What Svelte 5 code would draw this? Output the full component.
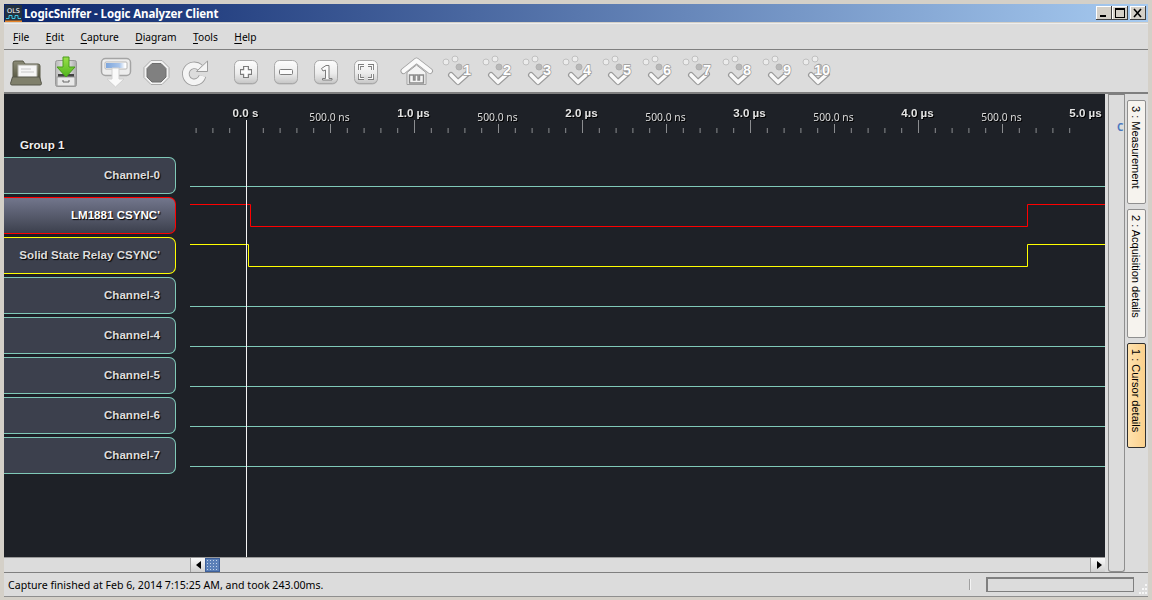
<script lang="ts">
	const menus = [
		{ key: 'F', rest: 'ile' },
		{ key: 'E', rest: 'dit' },
		{ key: 'C', rest: 'apture' },
		{ key: 'D', rest: 'iagram' },
		{ key: 'T', rest: 'ools' },
		{ key: 'H', rest: 'elp' }
	];

	const channels = [
		{ name: 'Channel-0', tone: 'teal' },
		{ name: "LM1881 CSYNC'", tone: 'red' },
		{ name: "Solid State Relay CSYNC'", tone: 'yellow' },
		{ name: 'Channel-3', tone: 'teal' },
		{ name: 'Channel-4', tone: 'teal' },
		{ name: 'Channel-5', tone: 'teal' },
		{ name: 'Channel-6', tone: 'teal' },
		{ name: 'Channel-7', tone: 'teal' }
	];

	const tabs = [
		{ label: '3 : Measurement', height: 104, active: false },
		{ label: '2 : Acquisition details', height: 129, active: false },
		{ label: '1 : Cursor details', height: 105, active: true }
	];

	const markers = [1, 2, 3, 4, 5, 6, 7, 8, 9, 10];

	// ruler: 500 ns is 84 px, minor ticks every 100 ns
	const origin = 246.5;
	const ticks = Array.from({ length: 53 }, (_, i) => i - 3).map((i) => ({
		x: origin + i * 16.8,
		top: i % 10 === 0 ? 120 : i % 5 === 0 ? 124 : 128
	}));
	const major = ['0.0 s', '1.0 µs', '2.0 µs', '3.0 µs', '4.0 µs', '5.0 µs'];
	const minor = [0, 1, 2, 3, 4];

	const flatLines = [186.5, 306.5, 346.5, 386.5, 426.5, 466.5];
</script>

{#snippet key(shape)}
	<svg class="icon" width="32" height="32" viewBox="0 0 32 32">
		<rect x="4.5" y="5.5" width="23" height="23" rx="5" fill="#8f8f8f" opacity="0.5" />
		<rect x="4.5" y="4.5" width="23" height="23" rx="5" fill="url(#keyFill)" stroke="#a8a8a8" />
		{@render shape()}
	</svg>
{/snippet}

{#snippet plus()}
	<path d="M16 10v12M10 16h12" stroke="#7c7c7c" stroke-width="6" stroke-linejoin="round" />
	<path d="M16 11v10M11 16h10" stroke="#fbfbfb" stroke-width="3.6" />
{/snippet}

{#snippet minus()}
	<rect x="9.5" y="13.5" width="13" height="5" rx="1" fill="#fbfbfb" stroke="#7c7c7c" />
{/snippet}

{#snippet one()}
	<path d="M11.5 12.5 16 9.5h3v13h3v1.5h-9.5v-1.5h3v-8.5l-2.5 1z" fill="#fbfbfb" stroke="#7c7c7c" />
{/snippet}

{#snippet fit()}
	<path
		d="M9.5 14v-4.5H14M18 9.5h4.5V14M22.5 18v4.5H18M14 22.5H9.5V18"
		fill="none"
		stroke="#7c7c7c"
		stroke-width="3"
	/>
	<path
		d="M9.5 14v-4.5H14M18 9.5h4.5V14M22.5 18v4.5H18M14 22.5H9.5V18"
		fill="none"
		stroke="#fbfbfb"
		stroke-width="1.2"
	/>
{/snippet}

<div class="window">
	<header class="titlebar">
		<svg class="logo" width="17" height="17" viewBox="0 0 17 17">
			<rect width="17" height="17" fill="#24313f" />
			<text class="logo-text" x="8.5" y="7.5">OLS</text>
			<path d="M1 13.5h3v-3h3v3h3v-3h3v3h3" fill="none" stroke="#39c6e8" />
			<rect y="15.5" width="17" height="1.5" fill="#e8862c" />
		</svg>
		<span class="title">LogicSniffer - Logic Analyzer Client</span>
		<div class="winbtns">
			<button class="winbtn" aria-label="Minimize">
				<svg width="16" height="14"><rect x="4" y="9" width="6" height="2" fill="#000" /></svg>
			</button>
			<button class="winbtn" aria-label="Maximize">
				<svg width="16" height="14"
					><rect x="3.5" y="2.5" width="9" height="9" fill="none" stroke="#000" /><rect
						x="3"
						y="2"
						width="10"
						height="2"
						fill="#000"
					/></svg
				>
			</button>
			<button class="winbtn close" aria-label="Close">
				<svg width="16" height="14"
					><path d="M4 3l7 8M11 3l-7 8" stroke="#000" stroke-width="1.6" /></svg
				>
			</button>
		</div>
	</header>

	<nav class="menubar">
		{#each menus as m}
			<span class="menu"><u>{m.key}</u>{m.rest}</span>
		{/each}
	</nav>

	<div class="toolbar">
		<div class="group">
			<svg class="icon" width="32" height="32" viewBox="0 0 32 32">
				<defs>
					<linearGradient id="keyFill" x1="0" y1="0" x2="0" y2="1">
						<stop offset="0" stop-color="#fdfdfd" />
						<stop offset="0.55" stop-color="#ececec" />
						<stop offset="1" stop-color="#c6c6c6" />
					</linearGradient>
					<linearGradient id="folderFill" x1="0" y1="0" x2="0" y2="1">
						<stop offset="0" stop-color="#8a8a76" />
						<stop offset="1" stop-color="#55553f" />
					</linearGradient>
					<linearGradient id="cabFill" x1="0" y1="0" x2="1" y2="0">
						<stop offset="0" stop-color="#b8b8b8" />
						<stop offset="0.5" stop-color="#f2f2f2" />
						<stop offset="1" stop-color="#aaaaaa" />
					</linearGradient>
					<linearGradient id="greenFill" x1="0" y1="0" x2="0" y2="1">
						<stop offset="0" stop-color="#9ae04a" />
						<stop offset="1" stop-color="#4fb51c" />
					</linearGradient>
					<linearGradient id="blueBar" x1="0" y1="0" x2="1" y2="0">
						<stop offset="0" stop-color="#7ea6dc" />
						<stop offset="0.7" stop-color="#a8c4ea" />
						<stop offset="1" stop-color="#ffffff" />
					</linearGradient>
				</defs>
				<path d="M3 24V7q0-2 2-2h8l2 3h13q2 0 2 2v14z" fill="url(#folderFill)" stroke="#5a5a48" />
				<rect x="8" y="9" width="19" height="13" fill="#f6f6f6" stroke="#b0b0a8" />
				<path d="M11 13h10M11 16h13" stroke="#c8c8c8" />
				<path d="M2.500 21h27l2 6.500q0 1.500-1.500 1.500H2q-1.500 0-1.500-1.500z" fill="#80806c" stroke="#56564a" />
			</svg>
			<svg class="icon" width="32" height="32" viewBox="0 0 32 32">
				<rect x="5.500" y="4.500" width="21" height="26" rx="2" fill="url(#cabFill)" stroke="#999" />
				<rect x="8" y="18" width="16" height="3" fill="#444" />
				<rect x="7" y="21" width="18" height="9" fill="#e8e8e8" stroke="#9a9a9a" />
				<path d="M13 24v2h6v-2" fill="none" stroke="#666" />
				<path d="M13 1h6v10h6l-9 10-9-10h6z" fill="url(#greenFill)" stroke="#4a9c1c" />
			</svg>
		</div>
		<div class="group">
			<svg class="icon" width="32" height="32" viewBox="0 0 32 32">
				<rect x="1.500" y="2.500" width="29" height="17" rx="4" fill="#ededed" stroke="#a4a4a4" stroke-width="1.500" />
				<rect x="5" y="6" width="22" height="7" rx="1" fill="#fff" stroke="#b4b4b4" />
				<rect x="6" y="7" width="19" height="5" fill="url(#blueBar)" />
				<path d="M12 12h7v11h5l-8.500 8L7 23h5z" fill="#fafafa" stroke="#d0d0d0" />
			</svg>
			<svg class="icon" width="32" height="32" viewBox="0 0 32 32">
				<path d="M11 4.500h11l7 7v10l-7 7H11l-7-7v-10z" fill="#f2f2f2" stroke="#ababab" />
				<path d="M12 7.500h9l5 5v8.500l-5 5h-9l-5-5v-8.500z" fill="#808080" stroke="#6e6e6e" />
			</svg>
			<svg class="icon" width="32" height="32" viewBox="0 0 32 32">
				<path d="M20 11.500A8.500 8.500 0 1 0 22.500 20" fill="none" stroke="#9c9c9c" stroke-width="7.500" />
				<path d="M20 11.500A8.500 8.500 0 1 0 22.500 20" fill="none" stroke="#f4f4f4" stroke-width="5.800" />
				<path d="M16.500 15.500 27.500 5v10.500z" fill="#f4f4f4" stroke="#9c9c9c" />
			</svg>
		</div>
		<div class="group">
			{@render key(plus)}
			{@render key(minus)}
			{@render key(one)}
			{@render key(fit)}
		</div>
		<div class="group">
			<svg class="icon" width="32" height="32" viewBox="0 0 32 32">
				<path d="M7 16.500 16.500 9l9.500 7.500v12H7z" fill="#f4f4f4" stroke="#a0a0a0" />
				<path d="M9.500 27v-8h4v5h1.500v-5h3v5h1.500v-5h4v8z" fill="none" stroke="#8a8a8a" stroke-width="1.400" />
				<path d="M3.500 15 16.500 4.500 30 15" fill="none" stroke="#a0a0a0" stroke-width="6" stroke-linecap="round" stroke-linejoin="round" />
				<path d="M3.500 15 16.500 4.500 30 15" fill="none" stroke="#fafafa" stroke-width="4.200" stroke-linecap="round" stroke-linejoin="round" />
			</svg>
			{#each markers as n}
				<svg class="icon marker" width="32" height="32" viewBox="0 0 32 32">
					<circle cx="6" cy="6" r="3" fill="#ececec" stroke="#c0c0c0" />
					<circle cx="15" cy="3" r="3" fill="#ececec" stroke="#c0c0c0" />
					<circle cx="19" cy="11" r="3" fill="#b8b8b8" stroke="#b0b0b0" />
					<path d="M11 19l7 7 9-8" fill="none" stroke="#9a9a9a" stroke-width="6" stroke-linejoin="round" stroke-linecap="round" />
					<path d="M11 19l7 7 9-8" fill="none" stroke="#fafafa" stroke-width="3.600" stroke-linecap="round" />
					<text class="marker-num" x={n === 10 ? 22 : 27} y="19">{n}</text>
				</svg>
			{/each}
		</div>
	</div>

	<div class="middle">
		<div class="center">
			<div class="view">
				<div class="labels">
					<div class="group-name">Group 1</div>
					{#each channels as c}
						<div class="channel {c.tone}"><span class="channel-name">{c.name}</span></div>
					{/each}
				</div>
				<svg class="signals" width="915" height="463" viewBox="190 94 915 463">
					{#each ticks as t}
						<line x1={t.x} x2={t.x} y1={t.top} y2="133" stroke="#8b8d90" />
					{/each}
					<g class="ruler">
						{#each major as label, i}
							<text class="major" x={origin - 1 + i * 168} y="117">{label}</text>
						{/each}
						{#each minor as i}
							<text class="minor" x={origin + 83 + i * 168} y="121">500.0 ns</text>
						{/each}
					</g>
					{#each flatLines as y}
						<line x1="190" x2="1105" y1={y} y2={y} stroke="#7fc9b8" />
					{/each}
					<path d="M190 204.500H250.500V226.500H1027.500V204.500H1105" fill="none" stroke="#ff0000" />
					<path d="M190 244.500H248.500V266.500H1027.500V244.500H1105" fill="none" stroke="#ffff00" />
					<line x1="246.500" x2="246.500" y1="120" y2="557" stroke="#f4f4f4" />
				</svg>
			</div>
			<div class="hscroll">
				<div class="scroll-gap"></div>
				<div class="arrow left"></div>
				<div class="thumb"></div>
				<div class="track"></div>
				<div class="arrow right"></div>
			</div>
		</div>
		<aside class="dock">
			<div class="dock-panel"><span class="cursor-hint">C</span></div>
			<div class="tabs">
				{#each tabs as t}
					<div class="tab" class:active={t.active} style:height="{t.height}px">{t.label}</div>
				{/each}
			</div>
		</aside>
	</div>

	<footer class="status">
		<span class="message">Capture finished at Feb 6, 2014 7:15:25 AM, and took 243.00ms.</span>
		<div class="sep"></div>
		<div class="progress"></div>
		<svg class="grip" width="12" height="13" viewBox="0 0 12 13">
			<path d="M9 1h2v2H9zM6 5h2v2H6zM9 5h2v2H9zM3 9h2v2H3zM6 9h2v2H6zM9 9h2v2H9z" fill="#f6f6f6" />
		</svg>
	</footer>
</div>

<style>
	:global(body) {
		margin: 0;
		background: #d4d0c8;
	}

	.window {
		width: 1152px;
		height: 600px;
		box-sizing: border-box;
		display: flex;
		flex-direction: column;
		padding: 4px 4px 3px;
		background: #d4d0c8;
		font-family: 'Noto Sans', sans-serif;
		font-size: 11px;
		color: #000;
		overflow: hidden;
	}

	.titlebar {
		height: 18px;
		flex: none;
		display: flex;
		align-items: center;
		background: linear-gradient(90deg, #0a246a, #a6caf0);
		color: #fff;
	}

	.logo {
		margin-left: 1px;
		flex: none;
	}

	.logo-text {
		font-family: 'DejaVu Sans', sans-serif;
		font-size: 6.500px;
		font-weight: 400;
		fill: #fff;
		text-anchor: middle;
	}

	.title {
		margin-left: 2px;
		font-weight: 700;
		font-size: 11.500px;
		letter-spacing: -0.1px;
		white-space: nowrap;
	}

	.winbtns {
		margin-left: auto;
		margin-right: 2px;
		display: flex;
	}

	.winbtn {
		width: 16px;
		height: 14px;
		padding: 0;
		border: none;
		display: block;
		background: #d4d0c8;
		box-shadow:
			inset -1px -1px 0 #404040,
			inset 1px 1px 0 #fff;
	}

	.winbtn svg {
		display: block;
	}

	.winbtn.close {
		margin-left: 2px;
	}

	.menubar {
		flex: none;
		height: 27px;
		margin-top: 1px;
		display: flex;
		align-items: center;
		padding-left: 9px;
		gap: 16.500px;
		background: #dcdcdc;
		border-top: 1px solid #ededed;
		border-bottom: 1px solid #7f7f7f;
		box-sizing: border-box;
		font-size: 10.200px;
	}

	.menu u {
		text-underline-offset: 2px;
	}

	.toolbar {
		flex: none;
		height: 44px;
		box-sizing: border-box;
		display: flex;
		align-items: center;
		gap: 18px;
		padding: 2px 0 0 6px;
		background: #dcdcdc;
		border-bottom: 2px solid #7f7f7f;
	}

	.group {
		display: flex;
		gap: 8px;
	}

	.icon {
		display: block;
		overflow: visible;
		flex: none;
	}

	.marker-num {
		font-family: 'Liberation Sans', sans-serif;
		font-size: 14.500px;
		font-weight: 700;
		text-anchor: middle;
		fill: #ffffff;
		stroke: #9a9a9a;
		stroke-width: 1.4px;
		paint-order: stroke;
	}

	.middle {
		flex: 1;
		min-height: 0;
		display: flex;
	}

	.center {
		width: 1101px;
		flex: none;
		display: flex;
		flex-direction: column;
	}

	.view {
		flex: 1;
		min-height: 0;
		display: flex;
		background: #1e2127;
	}

	.labels {
		width: 186px;
		flex: none;
		padding-top: 43px;
		box-sizing: border-box;
		display: flex;
		flex-direction: column;
		font-family: 'Liberation Sans', sans-serif;
		font-weight: 700;
		font-size: 11.600px;
	}

	.group-name {
		height: 20px;
		line-height: 16px;
		padding-left: 16px;
		color: #f0f0f0;
		text-shadow: 1px 1px 1px #000;
	}

	.channel {
		width: 172px;
		height: 37px;
		margin-bottom: 3px;
		box-sizing: border-box;
		display: flex;
		align-items: center;
		justify-content: flex-end;
		padding-right: 15px;
		background: #3c404d;
		border: 1px solid #7fc9b8;
		border-left: none;
		border-radius: 0 7px 7px 0;
		color: #dedede;
		text-shadow: 1px 1px 1px #000;
		white-space: nowrap;
	}

	.channel-name {
		margin-bottom: 2px;
	}

	.channel.red {
		border-color: #ff0000;
		background: linear-gradient(180deg, #72768c, #3c404d);
		color: #fff;
	}

	.channel.yellow {
		border-color: #ffff00;
	}

	.signals {
		display: block;
		flex: none;
	}

	.ruler {
		filter: drop-shadow(1px 1px 0 #000);
	}

	.major {
		font-family: 'Liberation Sans', sans-serif;
		font-size: 11.600px;
		font-weight: 700;
		fill: #e4e4e4;
		text-anchor: middle;
	}

	.minor {
		font-family: 'Noto Sans', sans-serif;
		font-size: 10.300px;
		fill: #dcdcdc;
		text-anchor: middle;
	}

	.hscroll {
		flex: none;
		height: 14px;
		display: flex;
		background: #dcdcdc;
		border-top: 1px solid #9a9a9a;
	}

	.scroll-gap {
		width: 186px;
		flex: none;
	}

	.arrow {
		width: 15px;
		flex: none;
		position: relative;
		background: linear-gradient(180deg, #fafafa, #d0d0d0);
		border-left: 1px solid #a0a0a0;
		box-sizing: border-box;
	}

	.arrow::after {
		content: '';
		position: absolute;
		top: 3px;
		border: 4px solid transparent;
	}

	.arrow.left::after {
		left: 1px;
		border-right: 5px solid #000;
	}

	.arrow.right::after {
		left: 6px;
		border-left: 5px solid #000;
	}

	.thumb {
		width: 15px;
		flex: none;
		background-color: #5b80b8;
		background-image: radial-gradient(#c4d4ea 0.7px, transparent 0.8px);
		background-size: 3px 3px;
		border: 1px solid #3d5f99;
		box-sizing: border-box;
	}

	.track {
		flex: 1;
	}

	.dock {
		flex: 1;
		display: flex;
		background: #dcdcdc;
		padding-left: 3px;
	}

	.dock-panel {
		width: 17px;
		flex: none;
		box-sizing: border-box;
		position: relative;
		border: 1px solid #8f8f8f;
		border-top-color: #7f7f7f;
		border-radius: 0 0 3px 3px;
	}

	.cursor-hint {
		position: absolute;
		left: 8px;
		top: 26px;
		font-size: 10px;
		line-height: 12px;
		color: #4a78c0;
		font-weight: 700;
	}

	.tabs {
		margin-left: 2px;
		padding-top: 6px;
		display: flex;
		flex-direction: column;
		gap: 5px;
	}

	.tab {
		width: 19px;
		box-sizing: border-box;
		writing-mode: vertical-rl;
		padding: 5px 1px 0 0;
		background: #f6f3ee;
		border: 1px solid #8f8f8f;
		border-radius: 2px;
		font-family: 'Liberation Sans', sans-serif;
		font-size: 11px;
		line-height: 17px;
		white-space: nowrap;
	}

	.tab.active {
		background: linear-gradient(90deg, #ffe2ae, #fbd08c);
		border-color: #303030;
	}

	.status {
		flex: none;
		height: 25px;
		box-sizing: border-box;
		display: flex;
		align-items: center;
		position: relative;
		background: #dcdcdc;
		border-top: 1px solid #7f7f7f;
		border-bottom: 1px solid #8f8f8f;
		padding-left: 4px;
	}

	.message {
		font-size: 10.600px;
		white-space: nowrap;
	}

	.sep {
		margin-left: auto;
		width: 1px;
		height: 11px;
		background: #f4f4f4;
		box-shadow: -1px 0 0 #a0a0a0;
	}

	.progress {
		width: 148px;
		height: 15px;
		box-sizing: border-box;
		margin-left: 15px;
		margin-right: 14px;
		border: 2px solid #7f7f7f;
		border-bottom-width: 1px;
		border-right-width: 1px;
		background: #dcdcdc;
	}

	.grip {
		position: absolute;
		right: 0;
		bottom: 0;
	}
</style>
